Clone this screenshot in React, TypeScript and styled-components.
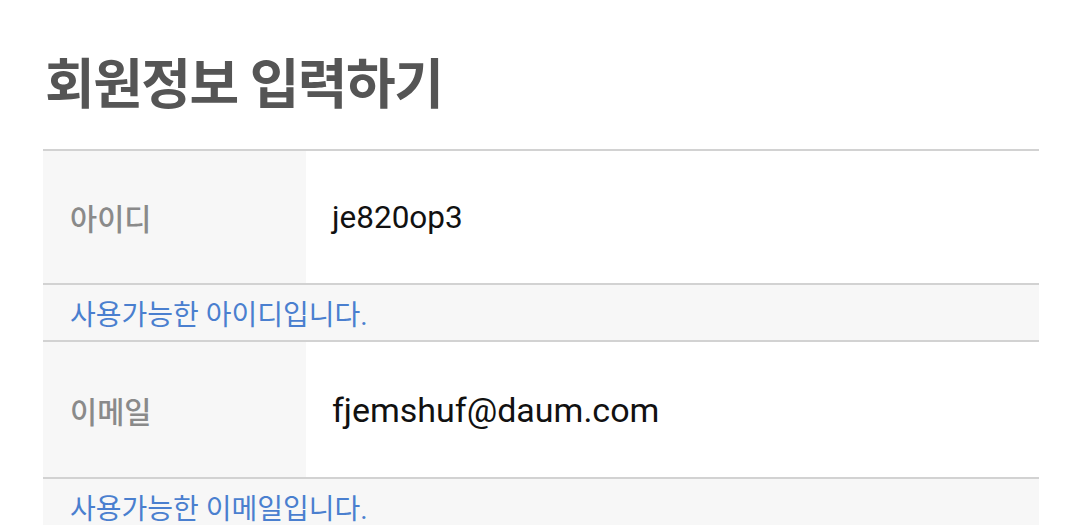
import styled, { createGlobalStyle } from "styled-components";

const GlobalStyle = createGlobalStyle`
  body {
    margin: 0;
    background: #ffffff;
    font-family: Roboto, "Noto Sans CJK KR", sans-serif;
  }
`;

const Page = styled.div`
  padding: 0 41px 0 43px;
  overflow: hidden;
  height: 525px;
`;

const Title = styled.h1`
  margin: 0;
  padding: 59px 0 0 2px;
  height: 149px;
  box-sizing: border-box;
  font-size: 54px;
  line-height: 1;
  font-weight: 700;
  letter-spacing: -1.5px;
  color: #555555;
`;

const Table = styled.div`
  border-top: 2px solid #d2d2d2;
`;

const FieldRow = styled.div<{ $height: number }>`
  display: grid;
  grid-template-columns: 263px 1fr;
  height: ${(p) => p.$height}px;
  border-bottom: 2px solid #d2d2d2;
`;

const Label = styled.div`
  display: flex;
  align-items: center;
  padding-left: 27px;
  background: #f7f7f7;
  color: #8a8a8a;
  font-size: 29.5px;
  font-weight: 500;
`;

const Value = styled.div<{ $size: number }>`
  display: flex;
  align-items: center;
  padding-left: 26px;
  color: #111111;
  font-size: ${(p) => p.$size}px;
`;

const Notice = styled.div`
  display: flex;
  align-items: center;
  height: 55px;
  padding-left: 27px;
  background: #f7f7f7;
  border-bottom: 2px solid #d2d2d2;
  color: #4a7fcf;
  font-size: 28px;
`;

const fields = [
  { label: "아이디", value: "je820op3", size: 31.5, height: 132, notice: "사용가능한 아이디입니다." },
  { label: "이메일", value: "fjemshuf@daum.com", size: 34, height: 135, notice: "사용가능한 이메일입니다." },
];

export default function App() {
  return (
    <>
      <GlobalStyle />
      <Page>
        <Title>회원정보 입력하기</Title>
        <Table>
          {fields.map((f) => (
            <div key={f.label}>
              <FieldRow $height={f.height}>
                <Label>{f.label}</Label>
                <Value $size={f.size}>{f.value}</Value>
              </FieldRow>
              <Notice>{f.notice}</Notice>
            </div>
          ))}
        </Table>
      </Page>
    </>
  );
}
